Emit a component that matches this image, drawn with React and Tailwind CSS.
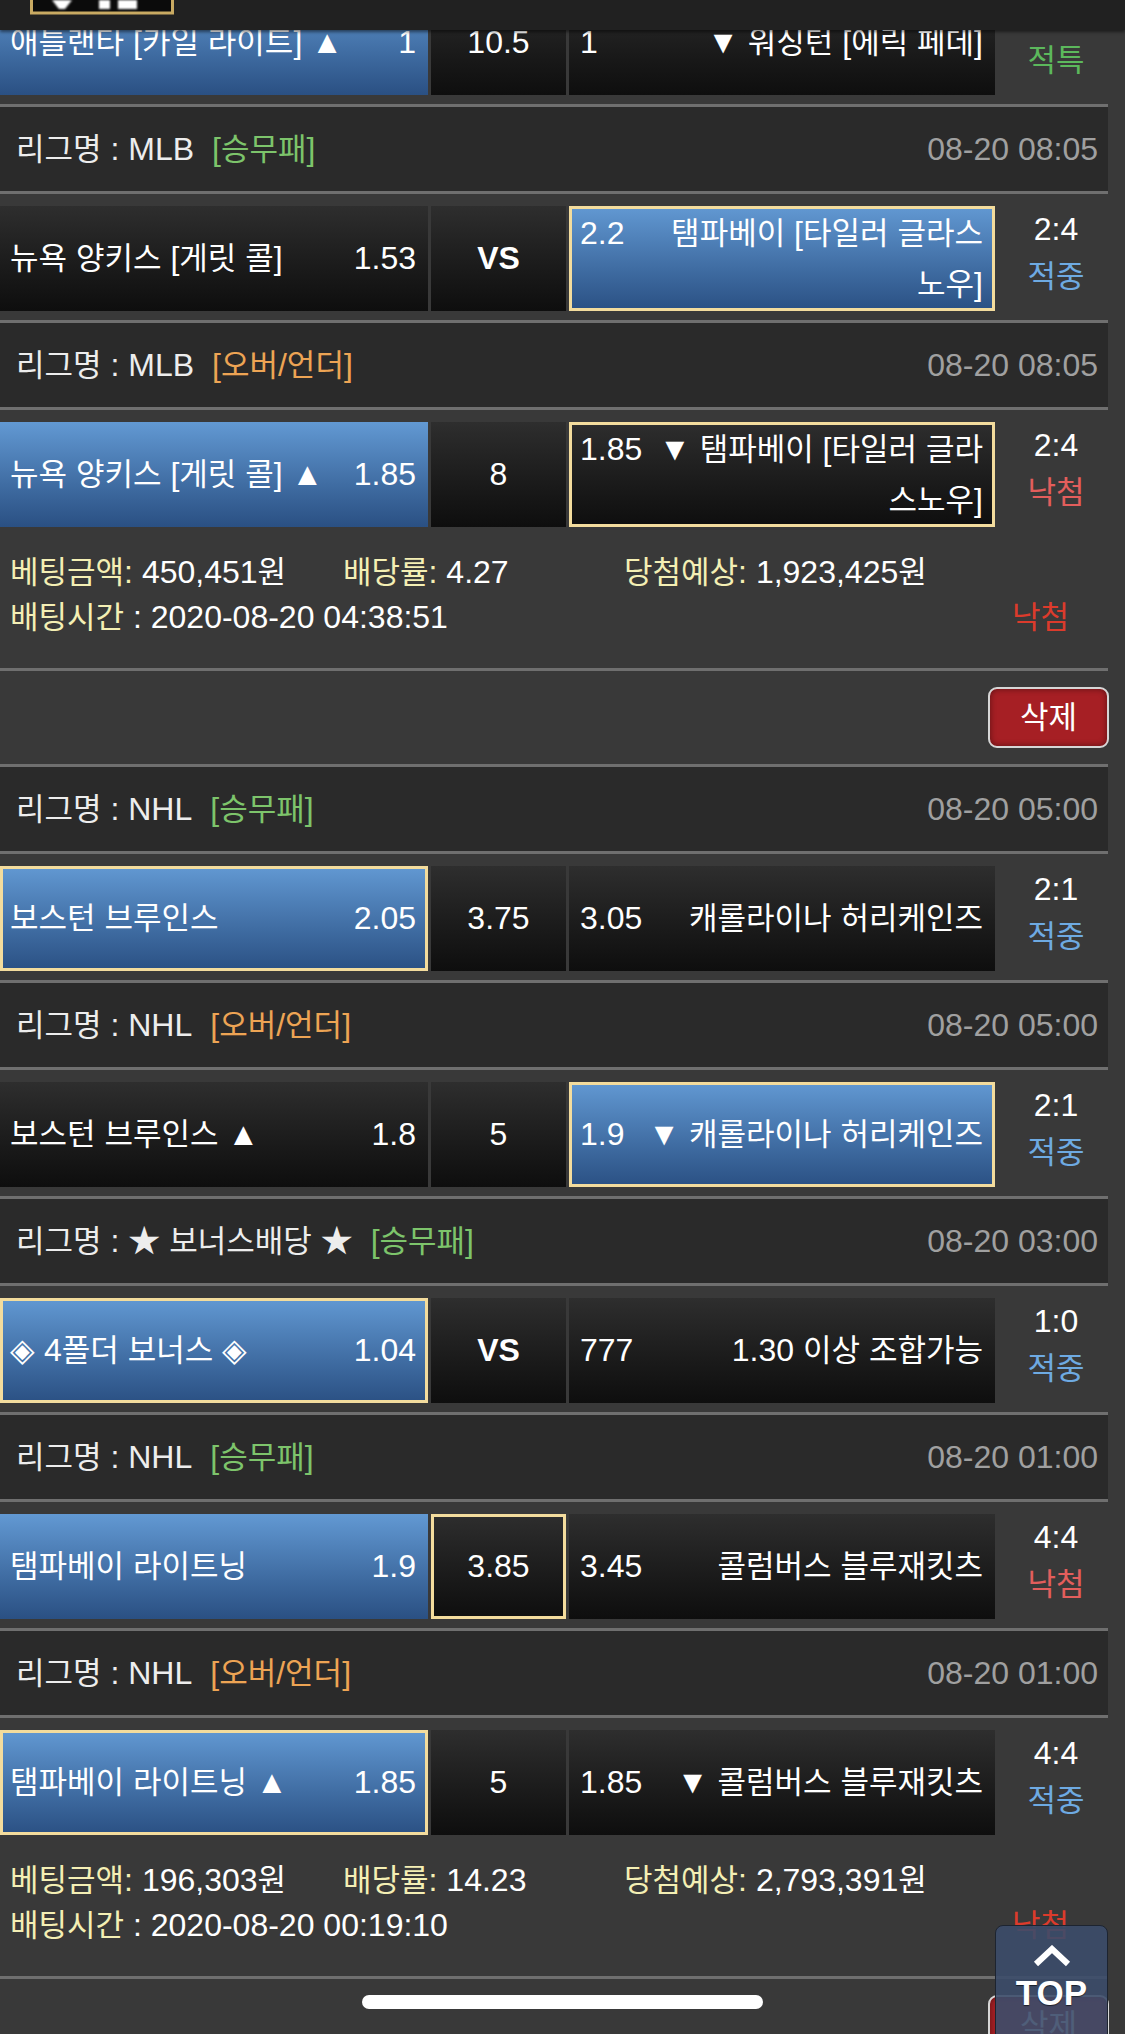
import React from 'react';

// 한글 구간만 따로 감싸서 크기를 맞춘다 (Noto CJK 한글 폭 보정)
const HANGUL = /([\uAC00-\uD7A3]+)/;

const Ko = ({ text }) =>
  String(text)
    .split(HANGUL)
    .map((part, i) =>
      i % 2 === 1 ? (
        <span key={i} className="text-[31px]">
          {part}
        </span>
      ) : (
        part
      )
    );

// 맨 위 경기는 헤더 뒤로 스크롤되어 스코어가 가려져 있음
const FIRST_ROW = {
  home: '애틀랜타 [카일 라이트] ▲',
  homeOdds: '1',
  mid: '10.5',
  away: ['▼ 워싱턴 [에릭 페데]'],
  awayOdds: '1',
  score: '',
  result: '적특',
  blue: 'home',
  pick: null,
};

const BETS = [
  {
    games: [
      {
        league: 'MLB', type: '승무패', time: '08-20 08:05',
        home: '뉴욕 양키스 [게릿 콜]', homeOdds: '1.53', mid: 'VS',
        away: ['탬파베이 [타일러 글라스', '노우]'], awayOdds: '2.2',
        score: '2:4', result: '적중', blue: 'away', pick: 'away',
      },
      {
        league: 'MLB', type: '오버/언더', time: '08-20 08:05',
        home: '뉴욕 양키스 [게릿 콜] ▲', homeOdds: '1.85', mid: '8',
        away: ['▼ 탬파베이 [타일러 글라', '스노우]'], awayOdds: '1.85',
        score: '2:4', result: '낙첨', blue: 'home', pick: 'away',
      },
    ],
    amount: '450,451원', rate: '4.27', expect: '1,923,425원',
    betTime: '2020-08-20 04:38:51', status: '낙첨',
  },
  {
    games: [
      {
        league: 'NHL', type: '승무패', time: '08-20 05:00',
        home: '보스턴 브루인스', homeOdds: '2.05', mid: '3.75',
        away: ['캐롤라이나 허리케인즈'], awayOdds: '3.05',
        score: '2:1', result: '적중', blue: 'home', pick: 'home',
      },
      {
        league: 'NHL', type: '오버/언더', time: '08-20 05:00',
        home: '보스턴 브루인스 ▲', homeOdds: '1.8', mid: '5',
        away: ['▼ 캐롤라이나 허리케인즈'], awayOdds: '1.9',
        score: '2:1', result: '적중', blue: 'away', pick: 'away',
      },
      {
        league: '★ 보너스배당 ★', type: '승무패', time: '08-20 03:00',
        home: '◈ 4폴더 보너스 ◈', homeOdds: '1.04', mid: 'VS',
        away: ['1.30 이상 조합가능'], awayOdds: '777',
        score: '1:0', result: '적중', blue: 'home', pick: 'home',
      },
      {
        league: 'NHL', type: '승무패', time: '08-20 01:00',
        home: '탬파베이 라이트닝', homeOdds: '1.9', mid: '3.85',
        away: ['콜럼버스 블루재킷츠'], awayOdds: '3.45',
        score: '4:4', result: '낙첨', blue: 'home', pick: 'mid',
      },
      {
        league: 'NHL', type: '오버/언더', time: '08-20 01:00',
        home: '탬파베이 라이트닝 ▲', homeOdds: '1.85', mid: '5',
        away: ['▼ 콜럼버스 블루재킷츠'], awayOdds: '1.85',
        score: '4:4', result: '적중', blue: 'home', pick: 'home',
      },
    ],
    amount: '196,303원', rate: '14.23', expect: '2,793,391원',
    betTime: '2020-08-20 00:19:10', status: '낙첨',
  },
];

const resultColor = {
  적중: 'text-[#6eaae2]',
  낙첨: 'text-[#e35e5c]',
  적특: 'text-[#5cb85c]',
};

const typeColor = {
  승무패: 'text-[#7dc46b]',
  '오버/언더': 'text-[#eda454]',
};

const Line = () => <div className="mr-[17px] h-[3px] bg-[#6f6f6f]" />;

// ===== 경기 셀 =====
const Cell = ({ blue, picked, className = '', children }) => (
  <div
    className={`flex h-full items-center ${
      blue
        ? 'bg-linear-to-b from-[#6299d3] to-[#2a5083]'
        : 'bg-linear-to-b from-[#2e2e2e] to-[#0e0e0e]'
    } ${picked ? 'shadow-[inset_0_0_0_3px_#f3dc9d]' : ''} ${className}`}
  >
    {children}
  </div>
);

const MatchRow = ({ m }) => (
  <div className="flex h-[105px] leading-[51px]">
    <Cell
      blue={m.blue === 'home'}
      picked={m.pick === 'home'}
      className="w-[428px] justify-between pl-[10px] pr-[12px]"
    >
      <span className="whitespace-nowrap">
        <Ko text={m.home} />
      </span>
      <span>{m.homeOdds}</span>
    </Cell>
    <Cell
      blue={m.blue === 'mid'}
      picked={m.pick === 'mid'}
      className={`ml-[3px] w-[135px] justify-center ${m.mid === 'VS' ? 'font-bold' : ''}`}
    >
      {m.mid}
    </Cell>
    <Cell
      blue={m.blue === 'away'}
      picked={m.pick === 'away'}
      className="ml-[3px] w-[426px] pl-[11px] pr-[12px]"
    >
      <div className="w-full">
        <div className="flex justify-between gap-[10px] whitespace-nowrap">
          <span>{m.awayOdds}</span>
          <span>
            <Ko text={m.away[0]} />
          </span>
        </div>
        {m.away[1] && (
          <div className="text-right">
            <Ko text={m.away[1]} />
          </div>
        )}
      </div>
    </Cell>
    <div className="w-[122px] text-center leading-[47px]">
      <div className="h-[47px]">{m.score}</div>
      <div className={resultColor[m.result]}>
        <Ko text={m.result} />
      </div>
    </div>
  </div>
);

const Game = ({ g }) => (
  <div>
    <Line />
    <div className="mr-[17px] flex h-[84px] items-center justify-between bg-[#2a2a2a] pl-[16px] pr-[10px]">
      <div className="text-[#ededed]">
        <Ko text={`리그명 : ${g.league}`} />
        <span className={`ml-[18px] ${typeColor[g.type]}`}>
          [<Ko text={g.type} />]
        </span>
      </div>
      <span className="text-[#a0a0a0]">{g.time}</span>
    </div>
    <Line />
    <div className="pb-[9px] pt-[12px]">
      <MatchRow m={g} />
    </div>
  </div>
);

const BetSummary = ({ bet }) => (
  <div className="pb-[28px] pl-[10px] pt-[14px] leading-[45px]">
    <div className="flex">
      <div className="w-[333px]">
        <span className="text-[#f4efb4]"><Ko text="베팅금액:" /></span> <Ko text={bet.amount} />
      </div>
      <div className="w-[281px]">
        <span className="text-[#f4efb4]"><Ko text="배당률:" /></span> {bet.rate}
      </div>
      <div>
        <span className="text-[#f4efb4]"><Ko text="당첨예상:" /></span> <Ko text={bet.expect} />
      </div>
    </div>
    <div className="flex justify-between pr-[56px]">
      <div>
        <span className="text-[#f4efb4]"><Ko text="배팅시간" /></span> : {bet.betTime}
      </div>
      <span className="text-[#dc3b2c]">
        <Ko text={bet.status} />
      </span>
    </div>
  </div>
);

const DeleteRow = () => (
  <div>
    <Line />
    <div className="flex h-[93px] justify-end pr-[16px] pt-[16px]">
      <button className="h-[61px] w-[121px] rounded-[9px] border-2 border-[#d6d6d6] bg-[#a61f24] leading-[57px] text-white shadow-[inset_0_0_6px_rgba(0,0,0,0.45)]">
        <Ko text="삭제" />
      </button>
    </div>
  </div>
);

// 상단 로고 (아래쪽 일부만 보임)
const LogoTail = () => (
  <svg className="absolute left-[30px] top-0" width="144" height="15" viewBox="0 0 144 15">
    <defs>
      <filter id="soft" x="-20%" y="-50%" width="140%" height="200%">
        <feGaussianBlur stdDeviation="1.3" />
      </filter>
    </defs>
    <rect x="1.5" y="-12" width="141" height="25" fill="#0b0b0b" stroke="#c9aa62" strokeWidth="3" />
    <g fill="#fff" filter="url(#soft)">
      <polygon points="22,0 42,0 35,9 29,9" />
      <rect x="69" y="0" width="11" height="9" />
      <rect x="88" y="0" width="19" height="9" />
    </g>
  </svg>
);

export default function App() {
  return (
    <div className="relative h-[2034px] w-[1125px] overflow-hidden bg-[#393939] font-['Liberation_Sans','Noto_Sans_CJK_KR',sans-serif] text-[32px] text-white">
      <div className="-mt-[10px]">
        <div className="pb-[9px]">
          <MatchRow m={FIRST_ROW} />
        </div>
        {BETS.map((bet, i) => (
          <div key={i}>
            {bet.games.map((g, j) => (
              <Game key={j} g={g} />
            ))}
            <BetSummary bet={bet} />
            <DeleteRow />
          </div>
        ))}
      </div>

      {/* 상단 고정 헤더 (스크롤된 상태) */}
      <div className="absolute left-0 top-0 h-[30px] w-full bg-[#212121] shadow-[0_2px_3px_rgba(0,0,0,0.5)]">
        <LogoTail />
      </div>

      {/* TOP 버튼 */}
      <div className="absolute left-[995px] top-[1925px] flex h-[130px] w-[113px] flex-col items-center rounded-[8px] border border-[#1d2430] bg-[rgba(60,76,106,0.9)]">
        <svg className="mt-[19px]" width="38" height="22" viewBox="0 0 38 22">
          <polyline
            points="3,19 19,4 35,19"
            fill="none"
            stroke="#fff"
            strokeWidth="6"
            strokeLinejoin="miter"
          />
        </svg>
        <span className="mt-[8px] text-[35px] font-bold leading-none text-white [text-shadow:0_1px_1px_rgba(0,0,0,0.6)]">
          TOP
        </span>
      </div>

      {/* 홈 인디케이터 */}
      <div className="absolute left-[362px] top-[1995px] h-[14px] w-[401px] rounded-full bg-white" />
    </div>
  );
}
